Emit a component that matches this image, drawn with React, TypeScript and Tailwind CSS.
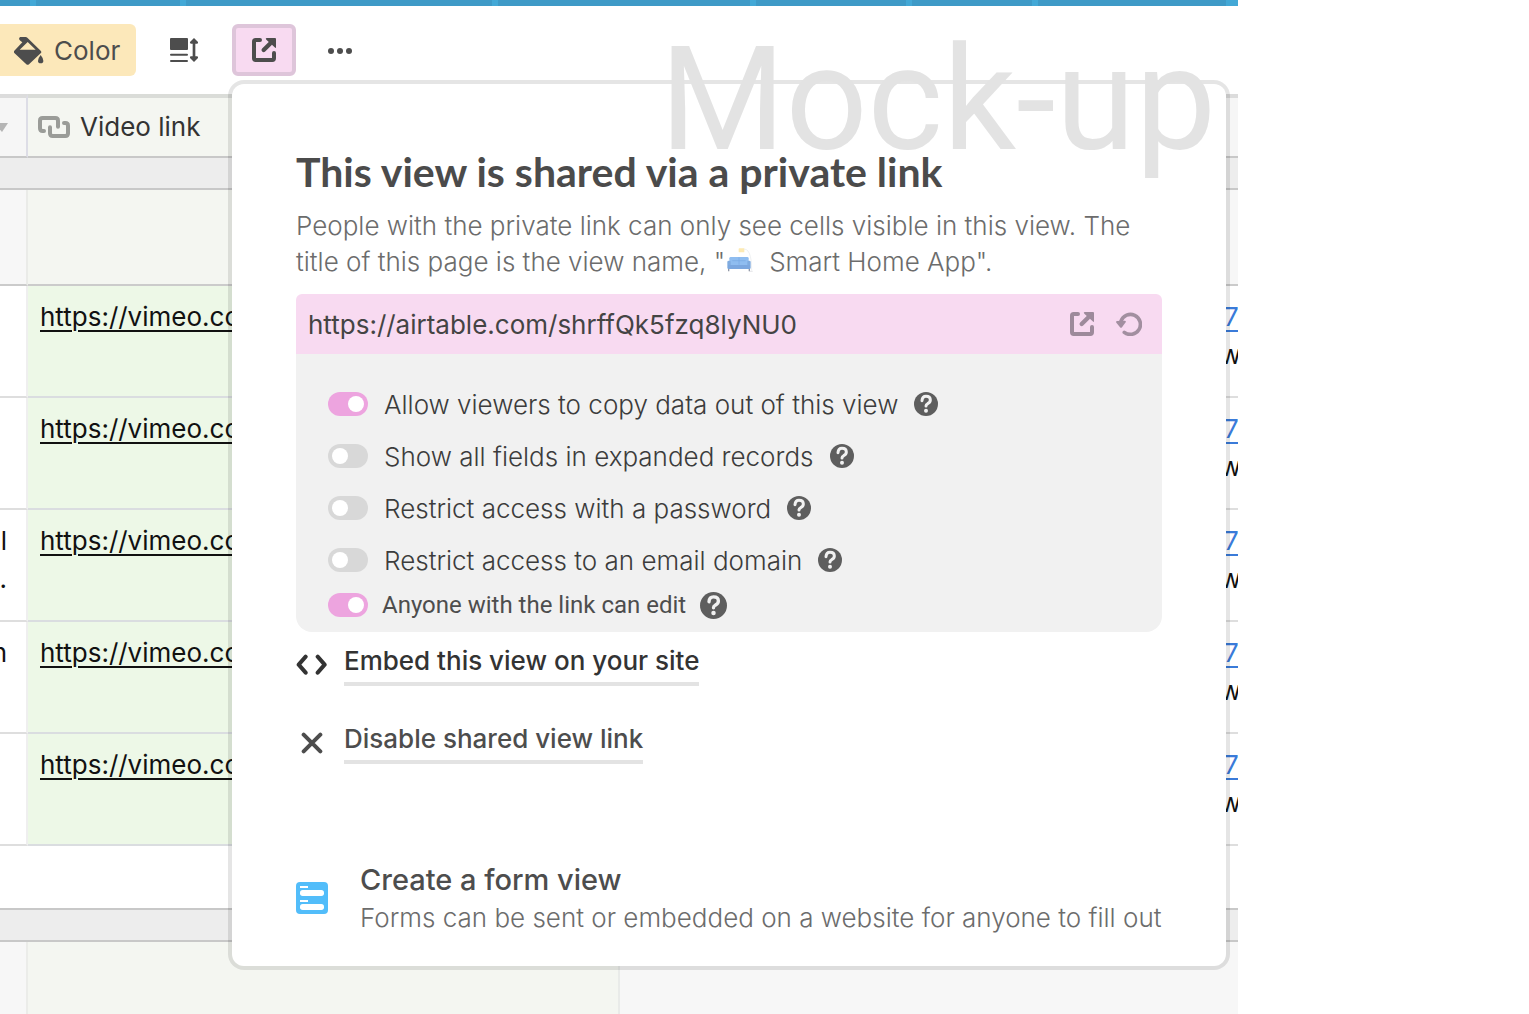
import React from "react";

function BucketIcon() {
  return (
    <svg viewBox="0 0 90 84" className="h-7 w-[30px] shrink-0" fill="#4d4d4d" aria-hidden="true">
      <path
        fillRule="evenodd"
        d="M18 0h17q3 0 5 2l40 39q4 4 0 8L45 82q-4 3-8 0L1 48q-3-3 0-7l24-25-6-5q-7-5-1-11ZM41 15 17 38h48Z"
      />
      <path d="M80 54q8 10 8 17a8 8 0 0 1-16 0q0-7 8-17Z" />
    </svg>
  );
}

function RowHeightIcon() {
  return (
    <svg viewBox="0 0 84 72" className="h-6 w-7" fill="#4d4d4d" aria-hidden="true">
      <rect x="0" y="0" width="54" height="36" rx="3" />
      <rect x="0" y="47" width="54" height="6" rx="3" />
      <rect x="0" y="66" width="54" height="6" rx="3" />
      <path d="M72 0 84 12q1 5-3 5h-5v38h5q4 0 3 5L72 72 60 60q-1-5 3-5h5V17h-5q-4 0-3-5Z" />
    </svg>
  );
}

function ShareIcon({ color }: { color: string }) {
  return (
    <svg viewBox="0 0 72 72" className="h-6 w-6" fill="none" aria-hidden="true">
      <path
        d="M24 6H11q-5 0-5 5v50q0 5 5 5h50q5 0 5-5V45"
        stroke={color}
        strokeWidth="12"
        strokeLinecap="round"
      />
      <path d="M35 36 54 17" stroke={color} strokeWidth="13" strokeLinecap="round" />
      <path d="M44 0h25q3 0 3 3v24q0 5-4 1L43 5q-4-4 1-5Z" fill={color} />
    </svg>
  );
}

function ReloadIcon() {
  return (
    <svg viewBox="0 0 78 72" className="h-6 w-[26px]" fill="none" aria-hidden="true">
      <path d="M15 27A30 30 0 1 1 25 61" stroke="#a28fa0" strokeWidth="11" strokeLinecap="round" />
      <path d="M3 27 26 26q5 1 3 5L18 46q-3 3-6 0L1 32q-2-4 2-5Z" fill="#a28fa0" />
    </svg>
  );
}

function LinkIcon() {
  return (
    <svg viewBox="0 0 96 66" className="h-[22px] w-8 shrink-0" fill="none" stroke="#9a9c98" strokeWidth="12" strokeLinecap="round" aria-hidden="true">
      <path d="M18 45h-4q-8 0-8-8V14q0-8 8-8h38q8 0 8 8v18" />
      <path d="M78 21h4q8 0 8 8v23q0 8-8 8H44q-8 0-8-8V34" />
    </svg>
  );
}

function HelpIcon({ large }: { large?: boolean }) {
  return (
    <svg viewBox="0 0 72 72" className={large ? "size-[27px]" : "size-6"} aria-hidden="true">
      <circle cx="36" cy="36" r="36" fill="#5e5e5e" />
      <path d="M24 26q1-13 12-13 13 0 13 11 0 7-8 11-5 3-5 7" fill="none" stroke="#f1f1f1" strokeWidth="9" strokeLinecap="round" />
      <circle cx="36" cy="56" r="6" fill="#f1f1f1" />
    </svg>
  );
}

function CouchIcon() {
  return (
    <svg viewBox="0 0 78 72" className="mb-2 ml-0.5 inline-block h-6 w-[26px] align-middle" aria-hidden="true">
      <path d="M46 4q28-8 28 64" fill="none" stroke="#e6e8ec" strokeWidth="2" />
      <rect x="35" y="1" width="17" height="12" rx="2" fill="#fdeab3" />
      <rect x="7" y="27" width="58" height="27" rx="4" fill="#8fbdf0" />
      <path d="M36 28v22M16 38h40" stroke="#79a9e2" strokeWidth="2" />
      <rect x="1" y="38" width="10" height="25" rx="4" fill="#7fabdf" />
      <rect x="61" y="38" width="10" height="25" rx="4" fill="#7fabdf" />
      <rect x="3" y="51" width="66" height="12" fill="#7ba7df" />
      <path d="M5 63v7M67 63v7" stroke="#9097a5" strokeWidth="4" />
      <path d="M66 70h11" stroke="#d6d8dd" strokeWidth="2" />
    </svg>
  );
}

function FormIcon() {
  return (
    <svg viewBox="0 0 96 96" className="size-8 shrink-0" aria-hidden="true">
      <rect width="96" height="96" rx="12" fill="#52bdfa" />
      <g fill="#fff">
        <rect x="12" y="12" width="24" height="6" />
        <rect x="12" y="24" width="72" height="18" rx="8" />
        <rect x="12" y="54" width="24" height="6" />
        <rect x="12" y="66" width="72" height="18" rx="8" />
      </g>
    </svg>
  );
}

const rows = [
  { first: "", second: "" },
  { first: "", second: "" },
  { first: "l", second: "." },
  { first: "n", second: "" },
  { first: "", second: "" },
];

const options = [
  { id: "copy", label: "Allow viewers to copy data out of this view", on: true },
  { id: "fields", label: "Show all fields in expanded records", on: false },
  { id: "password", label: "Restrict access with a password", on: false },
  { id: "domain", label: "Restrict access to an email domain", on: false },
];

function Toggle({ id, on }: { id: string; on: boolean }) {
  return (
    <input
      id={id}
      type="checkbox"
      role="switch"
      defaultChecked={on}
      className="h-6 w-10 shrink-0 appearance-none rounded-full bg-[#d8d8d8] p-1 before:block before:size-4 before:rounded-full before:bg-white checked:bg-[#eda4df] checked:before:ml-4"
    />
  );
}

function TopBar() {
  return (
    <div className="flex h-1.5 gap-1.5 bg-[#43a8d6]">
      <div className="w-[30px] bg-[#3e9ac7]" />
      <div className="w-36 bg-[#3e9ac7]" />
      <div className="w-[306px] bg-[#3e9ac7]" />
      <div className="w-[252px] bg-[#3e9ac7]" />
      <div className="w-[150px] bg-[#3e9ac7]" />
      <div className="w-[120px] bg-[#3e9ac7]" />
      <div className="mr-3 flex-1 bg-[#3e9ac7]" />
    </div>
  );
}

function Toolbar() {
  return (
    <div className="flex h-[88px] items-start pt-[18px] text-[26px] leading-8 text-[#4d4d4d]">
      <button className="flex h-[52px] w-[136px] items-center gap-2.5 rounded-r-md bg-[#fce8ba] pt-0.5 pl-3.5">
        <BucketIcon />
        Color
      </button>
      <button className="ml-5 flex h-[52px] w-14 items-center justify-center" aria-label="Row height">
        <RowHeightIcon />
      </button>
      <button
        className="ml-5 flex h-[52px] w-16 items-center justify-center rounded-md border-4 border-[#dec5da] bg-[#f8daf1]"
        aria-label="Share view"
      >
        <ShareIcon color="#4d4d4d" />
      </button>
      <button className="ml-4 flex h-[52px] w-14 items-center justify-center pt-0.5" aria-label="More">
        <svg viewBox="0 0 72 18" className="h-1.5 w-6" fill="#4d4d4d" aria-hidden="true">
          <circle cx="9" cy="9" r="9" />
          <circle cx="36" cy="9" r="9" />
          <circle cx="63" cy="9" r="9" />
        </svg>
      </button>
    </div>
  );
}

function Grid() {
  return (
    <div className="flex flex-1 flex-col">
      <table className="w-full table-fixed border-separate border-spacing-0 text-[26px] leading-[38px] text-[#111]">
        <colgroup>
          <col className="w-7" />
          <col className="w-[592px]" />
          <col />
        </colgroup>
        <thead>
          <tr className="h-16">
            <th className="border-t-4 border-r-2 border-b-2 border-t-[#dcdcdc] border-r-[#dddde6] border-b-[#c8c8c8] bg-[#f6f6f6] p-0">
              <svg viewBox="0 0 8 10" className="h-2.5 w-2" fill="#b5b5b5" aria-hidden="true">
                <path d="M-6 1H8L2 10Z" />
              </svg>
            </th>
            <th className="border-t-4 border-r-2 border-b-2 border-t-[#dadcd8] border-r-[#e7e9e4] border-b-[#c8c8c8] bg-[#f4f6f1] p-0 font-normal">
              <span className="flex items-center gap-2.5 pl-2.5 text-[#333]">
                <LinkIcon />
                Video link
              </span>
            </th>
            <th className="border-t-4 border-b-2 border-t-[#dcdcdc] border-b-[#c8c8c8] bg-[#f6f6f6] p-0" />
          </tr>
        </thead>
        <tbody>
          <tr className="h-8">
            <td colSpan={3} className="border-b-2 border-[#c8c8c8] bg-[#ededed] p-0" />
          </tr>
          <tr className="h-24">
            <td className="border-r-2 border-b-2 border-r-[#eaebe8] border-b-[#cbcbcb] bg-[#f7f7f7] p-0" />
            <td className="border-b-2 border-[#cbcbcb] bg-[#f4f6f1] p-0" />
            <td className="border-b-2 border-[#cbcbcb] bg-[#f7f7f7] p-0" />
          </tr>
          {rows.map((row, i) => (
            <tr key={i} className="h-28 align-top">
              <td className="overflow-hidden border-r-2 border-b-2 border-r-[#efefef] border-b-[#dedede] bg-white p-0 pt-3">
                <div className="flex w-[7px] justify-end">{row.first}</div>
                <div className="flex w-[7px] justify-end">{row.second}</div>
              </td>
              <td className="border-b-2 border-[#dadde0] bg-[#edf8e7] p-0 pt-3 pl-3">
                <a href="https://vimeo.com" className="underline decoration-2 underline-offset-4">
                  https://vimeo.com
                </a>
              </td>
              <td className="border-b-2 border-[#dedede] bg-white p-0 pt-3">
                <div className="ml-auto w-[18px] overflow-hidden pl-1">
                  <a href="#record" className="text-[#3a7bd9] underline decoration-2 underline-offset-4">
                    7
                  </a>
                </div>
                <div className="ml-auto w-[18px] overflow-hidden">w</div>
              </td>
            </tr>
          ))}
          <tr className="h-16">
            <td colSpan={3} className="border-b-2 border-[#c8c8c8] bg-white p-0" />
          </tr>
          <tr className="h-8">
            <td colSpan={3} className="border-b-2 border-[#c8c8c8] bg-[#ededed] p-0" />
          </tr>
        </tbody>
      </table>
      <div className="flex min-h-[72px] flex-1">
        <div className="w-7 border-r-2 border-[#ebece9] bg-[#f7f7f7]" />
        <div className="w-[592px] border-r-2 border-[#e9ebe9] bg-[#f4f6f1]" />
        <div className="flex-1 bg-[#f7f7f7]" />
      </div>
    </div>
  );
}

function ShareDialog() {
  return (
    <section
      role="dialog"
      aria-labelledby="share-title"
      className="absolute top-[84px] right-3 left-[232px] rounded-xl bg-white px-16 pt-[62px] pb-[30px] text-[26px] ring-4 ring-black/10"
    >
      <h1 id="share-title" className="font-['Lato'] text-[41px] leading-[52px] font-bold whitespace-nowrap text-[#4b4b4b]">
        This view is shared via a private link
      </h1>
      <p className="mt-2.5 leading-9 font-light text-[#6c6c6c]">
        People with the private link can only see cells visible in this view. The title of this page is the view name, "
        <CouchIcon />
        <span className="ml-4">Smart Home App".</span>
      </p>

      <div className="mt-3.5 flex h-[60px] items-center rounded-t-md bg-[#f8daf1] pr-5 pl-3">
        <input
          readOnly
          aria-label="Shared view link"
          value="https://airtable.com/shrffQk5fzq8lyNU0"
          className="min-w-0 flex-1 bg-transparent text-[#444] outline-none"
        />
        <button aria-label="Open link">
          <ShareIcon color="#9d8a9b" />
        </button>
        <button className="ml-[22px]" aria-label="Generate new link">
          <ReloadIcon />
        </button>
      </div>
      <div className="flex h-[278px] flex-col rounded-b-2xl bg-[#f1f1f1] px-8 pt-6 font-light text-[#3c3c3c]">
        {options.map((o) => (
          <div key={o.id} className="flex h-[52px] items-center">
            <Toggle id={o.id} on={o.on} />
            <label htmlFor={o.id} className="pl-4 whitespace-nowrap">
              {o.label}
            </label>
            <button className="ml-4" aria-label="Help">
              <HelpIcon />
            </button>
          </div>
        ))}
        <div className="flex h-[38px] items-center font-['Roboto'] text-[24px] font-normal text-[#4d4d4d]">
          <Toggle id="edit" on={true} />
          <label htmlFor="edit" className="pl-3.5 whitespace-nowrap">
            Anyone with the link can edit
          </label>
          <button className="ml-3.5" aria-label="Help">
            <HelpIcon large />
          </button>
        </div>
      </div>

      <div className="mt-3 flex flex-col items-start gap-[38px] font-medium">
        <a href="#embed" className="flex h-10 items-start text-[#333]">
          <svg viewBox="0 0 96 64" className="mt-2.5 h-[22px] w-8" fill="none" stroke="#333" strokeWidth="12" strokeLinecap="round" strokeLinejoin="round" aria-hidden="true">
            <path d="M29 7 8 31l21 24M65 7l21 24-21 24" />
          </svg>
          <span className="ml-4 border-b-4 border-[#e3e3e3] pb-1 leading-[34px]">Embed this view on your site</span>
        </a>
        <a href="#disable" className="flex h-10 items-start text-[#4d4d4d]">
          <svg viewBox="0 0 96 64" className="mt-2.5 h-[22px] w-8" fill="none" stroke="#4d4d4d" strokeWidth="12" strokeLinecap="round" aria-hidden="true">
            <path d="M23 7l50 50M73 7 23 57" />
          </svg>
          <span className="ml-4 border-b-4 border-[#e3e3e3] pb-1 leading-[34px]">Disable shared view link</span>
        </a>
      </div>

      <a href="#form" className="mt-[98px] flex items-center">
        <FormIcon />
        <span className="ml-8 flex flex-col whitespace-nowrap text-[#6c6c6c]">
          <span className="text-[29px] leading-10 font-medium text-[#4d4d4d]">Create a form view</span>
          <span className="leading-9 font-light">Forms can be sent or embedded on a website for anyone to fill out</span>
        </span>
      </a>
    </section>
  );
}

export default function App() {
  return (
    <div className="min-h-screen bg-white pr-[291px] font-['Inter',sans-serif]">
      <main className="relative flex min-h-screen flex-col overflow-hidden">
        <TopBar />
        <Toolbar />
        <Grid />
        <ShareDialog />
        <div className="pointer-events-none absolute top-3.5 right-[22px] font-['Roboto'] text-[144px] leading-[172px] font-normal whitespace-nowrap text-[#e3e3e3]">
          Mock-up
        </div>
      </main>
    </div>
  );
}
